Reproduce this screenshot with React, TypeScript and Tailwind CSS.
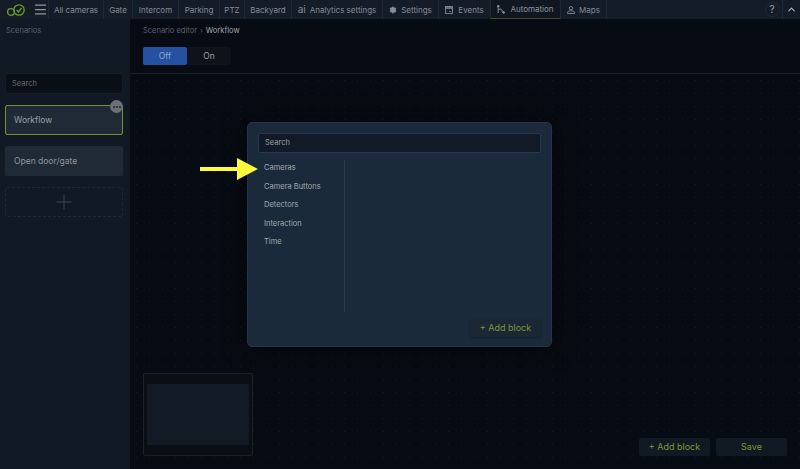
import { ChevronUp, Menu, Plus, Settings } from "lucide-react";

const navItems = [
  { label: "All cameras", width: "w-[55px]" },
  { label: "Gate", width: "w-[29px]" },
  { label: "Intercom", width: "w-[46px]" },
  { label: "Parking", width: "w-[41px]" },
  { label: "PTZ", width: "w-[25px]" },
  { label: "Backyard", width: "w-[47px]" },
];

const categories = ["Cameras", "Camera Buttons", "Detectors", "Interaction", "Time"];

const App = () => {
  return (
    <div className="relative flex h-[469px] w-[800px] flex-col overflow-hidden bg-[#070b13] font-['Inter',sans-serif] text-[#858b92]">
      {/* Top bar */}
      <header className="flex h-[19px] shrink-0 items-stretch bg-[#141c28] text-[8px]">
        <div className="flex w-[32px] items-center justify-center">
          <svg width="18" height="12" viewBox="0 0 18 12" fill="none" stroke="#6f9a2c" strokeWidth="1.3">
            <circle cx="4" cy="8" r="3.4" />
            <circle cx="12" cy="6" r="5.2" />
            <path d="M9.6 6l2 2 3-4" />
          </svg>
        </div>
        <div className="flex w-[17px] items-center justify-center border-r border-[#1f2936]">
          <Menu className="h-[15px] w-[15px] text-[#8f959c]" strokeWidth={2} />
        </div>
        {navItems.map((item) => (
          <div key={item.label} className={`flex items-center justify-center border-r border-[#1f2936] ${item.width}`}>
            {item.label}
          </div>
        ))}
        <div className="flex w-[91px] items-center justify-center gap-[4px] border-r border-[#1f2936]">
          <span className="text-[10px]">ai</span>
          Analytics settings
        </div>
        <div className="flex w-[56px] items-center justify-center gap-[4px] border-r border-[#1f2936]">
          <Settings className="h-[8px] w-[8px] fill-[#8f959c]" />
          Settings
        </div>
        <div className="flex w-[51px] items-center justify-center gap-[5px]">
          <svg width="8" height="8" viewBox="0 0 8 8" fill="none" stroke="#858b92" strokeWidth="0.9">
            <rect x="0.5" y="0.5" width="7" height="7" />
            <path d="M0.5 2h7" strokeWidth="1.6" />
            <path d="M4.5 5.5h1.5" />
          </svg>
          Events
        </div>
        <div className="flex w-[71px] items-center justify-center gap-[5px] rounded-b-[1px] border-x border-b border-x-[#1f2936] border-b-[#3f4f1d] bg-[#101721] text-[#8f959c]">
          <svg width="8" height="9" viewBox="0 0 8 9" fill="none" stroke="#8f959c" strokeWidth="0.9">
            <circle cx="1.2" cy="1.2" r="0.9" fill="#8f959c" />
            <path d="M1.2 2v6" />
            <path d="M1.2 5c0-1.3 3.8-1.3 3.8 0v2" />
            <circle cx="6.6" cy="7.4" r="0.9" fill="#8f959c" />
          </svg>
          Automation
        </div>
        <div className="flex w-[46px] items-center justify-center gap-[4px] border-r border-[#1f2936]">
          <svg width="8" height="8" viewBox="0 0 8 8" fill="none" stroke="#858b92" strokeWidth="0.9">
            <circle cx="4" cy="2.2" r="1.7" />
            <path d="M0.5 7.5v-1c0-1 1-1.6 2-1.6h3c1 0 2 .6 2 1.6v1z" />
          </svg>
          Maps
        </div>
        <div className="ml-auto flex items-stretch">
          <div className="flex w-[20px] items-center justify-center">
            <div className="flex h-[15px] w-[15px] items-center justify-center rounded-full border border-[#1f2936] text-[10px] text-[#99a0a8]">
              ?
            </div>
          </div>
          <div className="flex w-[18px] items-center justify-center border-l border-[#1f2936]">
            <ChevronUp className="h-[11px] w-[11px] text-[#b0b5ba]" strokeWidth={2.5} />
          </div>
        </div>
      </header>

      <div className="flex min-h-0 flex-1">
        {/* Sidebar */}
        <aside className="flex w-[130px] shrink-0 flex-col bg-[#111925] pl-[5px] pr-[7px] text-[8px]">
          <div className="pl-[1px] pt-[7px] text-[7.5px] leading-[10px] text-[#59616c]">Scenarios</div>
          <div className="mt-[37px] flex h-[21px] items-center rounded-[2px] border border-[#161e29] bg-[#0a0f17] pl-[6px] text-[7.5px] text-[#646b74]">
            Search
          </div>
          <div className="relative mt-[11px] flex h-[30px] items-center rounded-[2px] border border-[#71942e] bg-[#1f2a36] pl-[8px] text-[8.5px] text-[#9ba1a8]">
            Workflow
            <div className="absolute -right-[1px] -top-[6px] flex h-[13px] w-[13px] items-center justify-center gap-[1px] rounded-full bg-[#6b7077]">
              <span className="h-[2px] w-[2px] rounded-full bg-[#20262e]" />
              <span className="h-[2px] w-[2px] rounded-full bg-[#20262e]" />
              <span className="h-[2px] w-[2px] rounded-full bg-[#20262e]" />
            </div>
          </div>
          <div className="mt-[11px] flex h-[30px] items-center rounded-[2px] bg-[#1f2a36] pl-[9px] text-[8.5px] text-[#8f959c]">
            Open door/gate
          </div>
          <div className="mt-[11px] flex h-[30px] items-center justify-center rounded-[2px] border border-dashed border-[#1f2936]">
            <Plus className="h-[24px] w-[24px] text-[#525a64]" strokeWidth={0.7} />
          </div>
        </aside>

        {/* Editor */}
        <main className="flex min-w-0 flex-1 flex-col">
          <div className="h-[55px] shrink-0 border-b border-[#1a202a] pl-[13px]">
            <div className="flex items-center gap-[3px] pt-[7px] text-[7.5px] leading-[10px]">
              <span className="text-[#59616c]">Scenario editor</span>
              <span className="text-[#59616c]">›</span>
              <span className="text-[#a2a7ad]">Workflow</span>
            </div>
            <div className="mt-[11px] flex h-[18px] w-[88px] rounded-[2px] bg-[#0d121b] text-[8.5px]">
              <div className="flex w-[44px] items-center justify-center rounded-[2px] bg-[#2651a0] text-[#8ba5d3]">Off</div>
              <div className="flex w-[44px] items-center justify-center text-[#9ba1a8]">On</div>
            </div>
          </div>

          <div className="relative flex min-h-0 flex-1 flex-col justify-end bg-[radial-gradient(circle,#171c25_0.7px,transparent_0.8px)] bg-[size:13px_13px] pb-[13px] pl-[13px] pr-[13px]">
            <div className="flex items-end justify-between">
              <div className="flex h-[83px] w-[110px] items-center rounded-[2px] border border-[#1a212b] bg-[#0a0e15] px-[3px]">
                <div className="h-[61px] w-full bg-[#121a25]" />
              </div>
              <div className="flex gap-[6px] text-[9px] text-[#7a9a35]">
                <div className="flex h-[18px] w-[71px] items-center justify-center rounded-[2px] bg-[#111924]">+ Add block</div>
                <div className="flex h-[18px] w-[71px] items-center justify-center rounded-[2px] bg-[#111924]">Save</div>
              </div>
            </div>
          </div>
        </main>
      </div>

      {/* Add block dialog */}
      <div className="absolute left-[247px] top-[122px] flex h-[225px] w-[305px] flex-col rounded-[5px] border border-[#253548] bg-[#1a2a3b] px-[10px] pb-[9px] pt-[10px] shadow-[0_0_24px_rgba(0,0,0,0.6)]">
        <div className="flex h-[20px] shrink-0 items-center rounded-[2px] border border-[#27384a] bg-[#111a26] pl-[6px] text-[7.5px] text-[#9aa1a9]">
          Search
        </div>
        <div className="mt-[7px] flex min-h-0 flex-1">
          <ul className="flex h-[152px] w-[87px] flex-col gap-[8.5px] border-r border-[#2c3c4d] pl-[6px] pt-[3px] text-[7.5px] leading-[10px] text-[#a3a9b0]">
            {categories.map((category) => (
              <li key={category}>{category}</li>
            ))}
          </ul>
        </div>
        <div className="flex justify-end">
          <div className="flex h-[18px] w-[71px] items-center justify-center rounded-[2px] bg-[#1b2735] text-[9px] text-[#7a9a35] shadow-[0_1px_2px_rgba(0,0,0,0.25)]">
            + Add block
          </div>
        </div>
      </div>

      {/* Annotation arrow */}
      <svg className="absolute left-[200px] top-[158px]" width="58" height="22" viewBox="0 0 58 22">
        <path d="M0 9h37V0l21 11-21 11v-9H0z" fill="#fdfb3c" />
      </svg>
    </div>
  );
};

export default App;
